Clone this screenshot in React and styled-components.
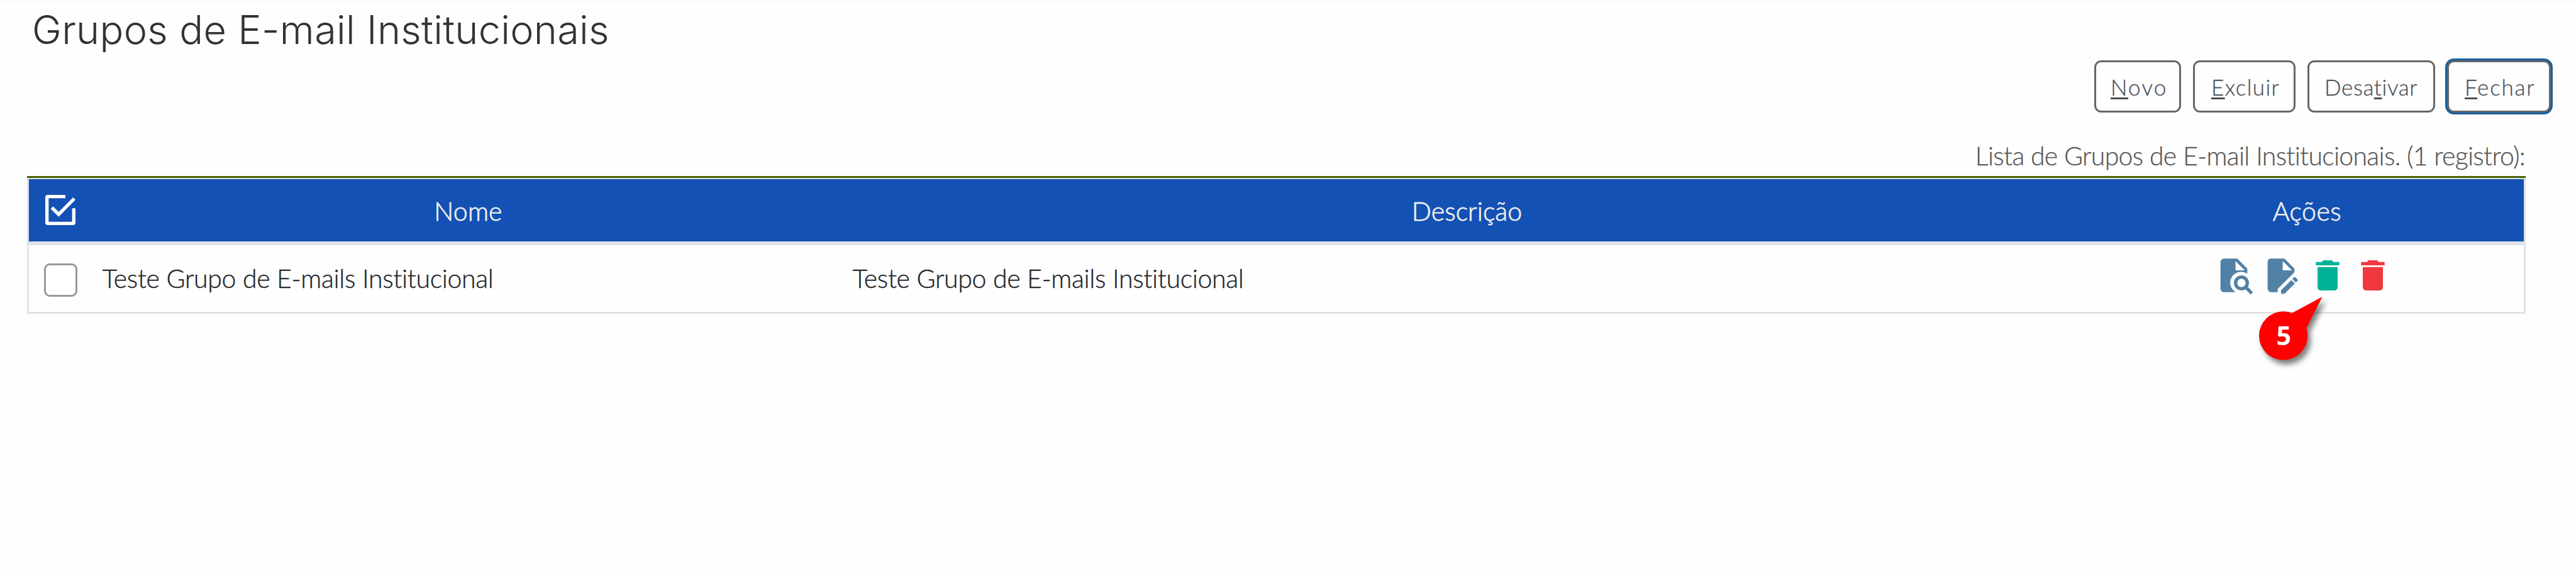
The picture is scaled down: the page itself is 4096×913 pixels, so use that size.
import React from "react";
import styled, { createGlobalStyle } from "styled-components";

const GlobalStyle = createGlobalStyle`
  *, *::before, *::after { box-sizing: border-box; }
  body {
    margin: 0;
    background: #fefefe;
    color: #212529;
    font-family: Lato, "Open Sans", sans-serif;
    font-weight: 300;
    overflow: hidden;
  }
`;

const Page = styled.main`
  width: 4096px;
  height: 913px;
  border-top: 3px solid #fafafa;
  overflow: hidden;
`;

const Title = styled.h1`
  height: 90px;
  margin: -3px 0 3px 51px;
  font: 300 63px/94px Inter, sans-serif;
  letter-spacing: 0.3px;
  color: #333;
`;

const Toolbar = styled.div`
  display: flex;
  justify-content: flex-end;
  gap: 19px;
  padding: 3px 40px 0 0;
`;

const ToolButton = styled.button`
  width: ${(p) => p.$width}px;
  height: 83px;
  padding: 1px 0 0 ${(p) => p.$indent}px;
  border: 3px solid #666;
  border-radius: 11px;
  background: #fefefe;
  box-shadow: ${(p) => (p.$focused ? "0 0 0 3px #1560a0" : "none")};
  color: #495057;
  font: 300 35px/50px Lato, sans-serif;
  letter-spacing: ${(p) => p.$tracking}px;
  text-align: left;
  white-space: nowrap;
  -webkit-text-stroke: 0.3px #495057;
`;

const AccessKey = styled.span`
  text-decoration: underline;
  text-decoration-thickness: 3px;
  text-underline-offset: 3px;
  text-decoration-skip-ink: none;
`;

const Caption = styled.div`
  height: 101px;
  padding: 44px 81px 0 0;
  font-size: 41px;
  line-height: 50px;
  letter-spacing: -0.7px;
  text-align: right;
  color: #555;
  -webkit-text-stroke: 0.3px #555;
`;

const Table = styled.section`
  width: 3973px;
  margin-left: 43px;
  border-top: 3px solid #4a6300;
`;

const GridRow = styled.div`
  display: grid;
  grid-template-columns: 102px 1193px 1983px 1fr;
  align-items: center;
`;

const HeaderRow = styled(GridRow)`
  height: 107px;
  border: 3px solid #dee2e6;
  border-top-width: 2px;
  border-bottom-width: 6px;
  background: #1351b4;
  color: #eee;
`;

const BodyRow = styled(GridRow)`
  height: 109px;
  border: 3px solid #e3e3e3;
  border-top: 0;
  background: #fefefe;
`;

const HeaderCell = styled.div`
  padding-top: 3px;
  font-size: 41px;
  line-height: 50px;
  letter-spacing: ${(p) => p.$tracking}px;
  text-align: center;
  -webkit-text-stroke: 0.8px #eee;
`;

const SelectCell = styled.div`
  display: flex;
  justify-content: center;
  padding: ${(p) => p.$shift};
`;

const Cell = styled.div`
  padding-left: 14.5px;
  font-size: 41px;
  line-height: 50px;
  letter-spacing: -0.33px;
  white-space: nowrap;
  -webkit-text-stroke: 0.4px #212529;
`;

const CheckBox = styled.span`
  width: 53px;
  height: 53px;
  border: 3px solid #999;
  border-radius: 9px;
  background: #fff;
`;

const Actions = styled.div`
  display: flex;
  justify-content: center;
  gap: 10.67px;
  padding: 0 12px 11px 0;
`;

const Action = styled.span`
  position: relative;
  width: 64px;
  height: 64px;
  color: ${(p) => p.$color};
  margin-left: ${(p) => p.$pull || 0}px;
`;

const Glyph = styled.svg`
  display: block;
  width: ${(p) => p.$size}px;
  height: ${(p) => p.$size}px;
`;

const Callout = styled.svg`
  position: absolute;
  z-index: 1;
  left: -93.5px;
  top: 48px;
  width: 146.76px;
  height: 146.76px;
  filter: drop-shadow(5px 7px 4px rgba(0, 0, 0, 0.5));
  pointer-events: none;
`;

const CalloutText = styled.text`
  font: 700 62px "Open Sans", sans-serif;
  fill: #fff;
  text-anchor: middle;
`;

const SelectAllIcon = () => (
  <Glyph $size={48} viewBox="0 0 18 18" fill="none" stroke="#fff" strokeWidth="2">
    <path d="M12 1H1.5Q1 1 1 1.5V16.5Q1 17 1.5 17H16.5Q17 17 17 16.5V8" />
    <path d="M3.9 7.6L8 11.6L17.3 2.2" />
  </Glyph>
);

const FileSearchIcon = () => (
  <Glyph $size={64} viewBox="0 0 24 24" fill="currentColor">
    <path d="M6 2A2 2 0 0 0 4 4V20A2 2 0 0 0 6 22H13.04A6.5 6.5 0 1 1 20 11.03V8L14 2H6M13 3.5L18.5 9H13V3.5Z" />
    <circle cx="16.5" cy="16.5" r="3.5" fill="none" stroke="currentColor" strokeWidth="2" />
    <path d="M19 19L22.7 22.7" stroke="currentColor" strokeWidth="2" />
  </Glyph>
);

const FileEditIcon = () => (
  <Glyph $size={64} viewBox="0 0 24 24" fill="currentColor">
    <path d="M6 2C4.89 2 4 2.89 4 4V20A2 2 0 0 0 6 22H10V20.09L12.09 18L20 10.1V8L14 2H6M13 3.5L18.5 9H13V3.5M20.15 13C20 13 19.86 13.05 19.75 13.16L18.73 14.18L20.82 16.26L21.84 15.25C22.05 15.03 22.05 14.67 21.84 14.46L20.54 13.16C20.43 13.05 20.29 13 20.15 13M18.14 14.77L12 20.92V23H14.08L20.23 16.85L18.14 14.77Z" />
  </Glyph>
);

const TrashIcon = () => (
  <Glyph $size={64} viewBox="0 0 24 24" fill="currentColor">
    <path d="M19 4H15.5L14.5 3H9.5L8.5 4H5V6H19M6 19A2 2 0 0 0 8 21H16A2 2 0 0 0 18 19V7H6V19Z" />
  </Glyph>
);

const buttons = [
  { before: "", key: "N", after: "ovo", width: 138, indent: 23, tracking: 2.2 },
  { before: "", key: "E", after: "xcluir", width: 163, indent: 26, tracking: 1.4 },
  { before: "Desa", key: "t", after: "ivar", width: 203, indent: 24, tracking: 0.65 },
  { before: "", key: "F", after: "echar", width: 165, indent: 25, tracking: 1.8, focused: true },
];

export default function App() {
  return (
    <Page>
      <GlobalStyle />
      <Title>Grupos de E-mail Institucionais</Title>
      <Toolbar>
        {buttons.map((b) => (
          <ToolButton key={b.after} $width={b.width} $indent={b.indent} $tracking={b.tracking} $focused={b.focused}>
            {b.before}
            <AccessKey>{b.key}</AccessKey>
            {b.after}
          </ToolButton>
        ))}
      </Toolbar>
      <Caption>Lista de Grupos de E-mail Institucionais. (1 registro):</Caption>
      <Table>
        <HeaderRow>
          <SelectCell $shift="0 2px 2px 0">
            <SelectAllIcon />
          </SelectCell>
          <HeaderCell $tracking={0.2}>Nome</HeaderCell>
          <HeaderCell $tracking={0.1}>Descrição</HeaderCell>
          <HeaderCell $tracking={0.5}>Ações</HeaderCell>
        </HeaderRow>
        <BodyRow>
          <SelectCell $shift="5px 2px 0 0">
            <CheckBox />
          </SelectCell>
          <Cell>Teste Grupo de E-mails Institucional</Cell>
          <Cell>Teste Grupo de E-mails Institucional</Cell>
          <Actions>
            <Action $color="#5281a6">
              <FileSearchIcon />
            </Action>
            <Action $color="#5281a6">
              <FileEditIcon />
            </Action>
            <Action $color="#00b398">
              <TrashIcon />
              <Callout viewBox="0 0 220 220" overflow="visible">
                <circle cx="82" cy="120" r="58" fill="#f00" />
                <path d="M103 65.5L175 27L138 100L90 120Z" fill="#f00" />
                <CalloutText x="83" y="143">5</CalloutText>
              </Callout>
            </Action>
            <Action $color="#f1383f" $pull={-2.67}>
              <TrashIcon />
            </Action>
          </Actions>
        </BodyRow>
      </Table>
    </Page>
  );
}
